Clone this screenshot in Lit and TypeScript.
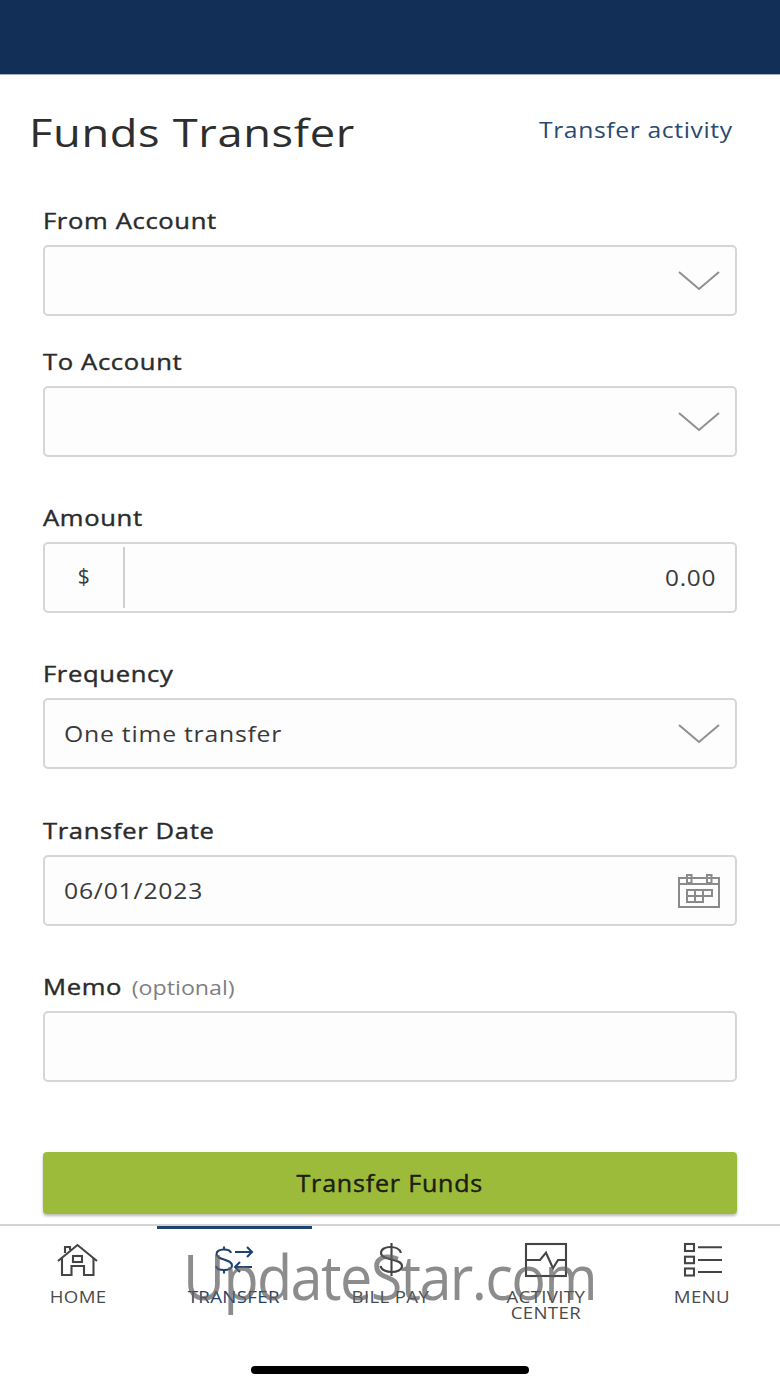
import { LitElement, html, css, svg } from "lit";
import { customElement } from "lit/decorators.js";

const chevron = html`<svg class="chev" width="42" height="22" viewBox="0 0 42 22" fill="none" stroke="#8f8f8f" stroke-width="2"><path d="M1 2 L21 19 L41 2"/></svg>`;

const icons = {
  home: svg`<path d="M1 18 L20.5 2 L40 18"/><path d="M5 15 V32 H14.500 V23 H27 V32 H36.500 V15"/><path d="M8 10 V4 H13 V7"/><rect x="16" y="13" width="9" height="6"/>`,
  transfer: svg`<path d="M22 9 H39 M34 4 L39 9 L34 14"/><path d="M39 24 H22 M27 19 L22 24 L27 29"/><path d="M18 10 C17 5.500 4 5 3.500 11 C3.500 17.500 19 15.500 19 22.500 C19 28.500 4 28.500 3 23"/><path d="M11 3.500 V7 M11 27 V30.500"/>`,
  bill: svg`<path d="M32 10 C30 2 12 2 12 10 C12 18 33 15 33 23 C33 31 13 31 11.500 23"/><path d="M22.500 0 V33"/>`,
  activity: svg`<rect x="1" y="1" width="40" height="32"/><path d="M1 17 H15 L21 9.700 L28 25.300 L33 17 H41"/>`,
  menu: svg`<rect x="4" y="1" width="9" height="7"/><rect x="4" y="13.700" width="9" height="6.500"/><rect x="4" y="25.500" width="9" height="7"/><path d="M17 4.300 H41 M17 17 H41 M17 29 H41"/>`,
};

@customElement("app-root")
export class AppRoot extends LitElement {
  static styles = css`
    :host {
      display: flex;
      flex-direction: column;
      position: relative;
      width: 780px;
      height: 1387px;
      overflow: hidden;
      background: #fff;
      font-family: "Open Sans", "Liberation Sans", sans-serif;
      color: #2b2b2b;
    }
    .top { height: 75px; background: #112f57; flex: none; border-bottom: 1px solid #9fb0c4; box-sizing: border-box; }
    .head { display: flex; justify-content: space-between; align-items: flex-start; padding: 28px 47px 0 29px; height: 99px; box-sizing: border-box; }
    h1 { margin: 0; font-size: 38px; line-height: 58px; font-weight: 400; letter-spacing: 0.55px; color: #2e2e2e; transform: scaleX(1.19); transform-origin: left center; }
    .link { font-size: 22px; line-height: 52px; letter-spacing: 0.55px; color: #2a4a70; transform: scaleX(1.122); transform-origin: right center; }
    .form { display: flex; flex-direction: column; padding: 0 43px; }
    .field { display: flex; flex-direction: column; }
    .f1 { margin-top: 32px; }
    .f2 { margin-top: 31px; }
    .f3 { margin-top: 46px; }
    .f4 { margin-top: 47px; }
    label { font-size: 21.500px; line-height: 30px; font-weight: 400; -webkit-text-stroke: 0.4px #2b2b2b; letter-spacing: 0.55px; color: #2b2b2b; height: 39px; transform: scaleX(1.19); transform-origin: left top; }
    .opt { font-size: 19.500px; font-weight: 400; -webkit-text-stroke: 0; letter-spacing: 0; color: #7f7f7f; margin-left: 2px; }
    .box { height: 71px; box-sizing: border-box; border: 2px solid #d6d6d6; border-radius: 5px; background: #fdfdfd; display: flex; align-items: center; justify-content: space-between; padding: 0 15px 0 19px; font-size: 22.500px; letter-spacing: 0.7px; color: #3a3a3a; }
    .val { transform: scaleX(1.1); transform-origin: left center; }
    .num { transform: scaleX(1.085); transform-origin: right center; }
    .box.amount { padding: 0 19px 0 0; }
    .cur { width: 80px; height: 61px; padding-bottom: 3px; flex: none; display: flex; align-items: center; justify-content: center; border-right: 2px solid #cfcfcf; font-size: 21px; box-sizing: border-box; }
    .cta { margin-top: 70px; height: 62px; background: #9cbb3b; border-radius: 4px; box-shadow: 0 2px 3px rgba(0,0,0,.28); display: flex; align-items: center; justify-content: center; font-size: 23px; font-weight: 400; -webkit-text-stroke: 0.45px #1c1f12; letter-spacing: 0.75px; color: #1c1f12; }
    .cta span { transform: scaleX(1.087); }
    nav { position: relative; margin-top: 10px; border-top: 2px solid #d4d4d4; display: grid; grid-template-columns: repeat(5, 1fr); height: 120px; box-sizing: border-box; }
    .tab { display: flex; flex-direction: column; align-items: center; padding-top: 17px; position: relative; font-size: 16.500px; line-height: 16px; letter-spacing: 0.3px; color: #4a4a4a; text-align: center; }
    .tab span { transform: scaleX(1.13); }
    .tab svg { width: 42px; height: 38px; fill: none; stroke: #444; stroke-width: 2.100; margin-bottom: 8px; overflow: visible; }
    .tab.on { color: #1f3f68; }
    .tab.on::before { content: ""; position: absolute; top: 0; left: 1px; right: 0; height: 3px; background: #1e4272; }
    .tab.on svg { stroke: #1e4272; }
    .homebar { align-self: center; width: 278px; height: 8px; border-radius: 4px; background: #000; margin-top: 22px; flex: none; }
    .mark { position: absolute; left: 183px; top: 1233px; font-size: 63px; line-height: 86px; letter-spacing: -1.800px; color: rgba(95,95,95,.72); white-space: nowrap; pointer-events: none; transform: scaleX(0.915); transform-origin: left center; }
  `;

  private field(cls: string, text: any, body: any) {
    return html`<div class="field ${cls}"><label>${text}</label>${body}</div>`;
  }

  render() {
    const tabs: [any, any, boolean][] = [
      ["HOME", icons.home, false],
      ["TRANSFER", icons.transfer, true],
      ["BILL PAY", icons.bill, false],
      [html`ACTIVITY<br>CENTER`, icons.activity, false],
      ["MENU", icons.menu, false],
    ];
    return html`
      <div class="top"></div>
      <div class="head"><h1>Funds Transfer</h1><span class="link">Transfer activity</span></div>
      <div class="form">
        ${this.field("f1", "From Account", html`<div class="box"><span></span>${chevron}</div>`)}
        ${this.field("f2", "To Account", html`<div class="box"><span></span>${chevron}</div>`)}
        ${this.field("f3", "Amount", html`<div class="box amount"><span class="cur">$</span><span class="num">0.00</span></div>`)}
        ${this.field("f3", "Frequency", html`<div class="box"><span class="val">One time transfer</span>${chevron}</div>`)}
        ${this.field("f4", "Transfer Date", html`<div class="box"><span class="val">06/01/2023</span>
          <svg width="42" height="34" viewBox="0 0 42 34" fill="none" stroke="#8a8a8a" stroke-width="2"><rect x="1" y="4" width="40" height="29"/><path d="M1 10 H41"/><rect x="9" y="1" width="4.500" height="8"/><rect x="29" y="1" width="4.500" height="8"/><path d="M9 16 H34 V22 H25 V28 H9 Z M9 22 H25 M17 16 V28 M25 16 V22"/></svg></div>`)}
        ${this.field("f3", html`Memo <span class="opt">(optional)</span>`, html`<div class="box"></div>`)}
        <div class="cta"><span>Transfer Funds</span></div>
      </div>
      <nav>
        ${tabs.map(([t, i, on]) => html`<div class="tab ${on ? "on" : ""}"><svg viewBox="0 0 42 38">${i}</svg><span>${t}</span></div>`)}
      </nav>
      <div class="homebar"></div>
      <div class="mark">UpdateStar.com</div>
    `;
  }
}
